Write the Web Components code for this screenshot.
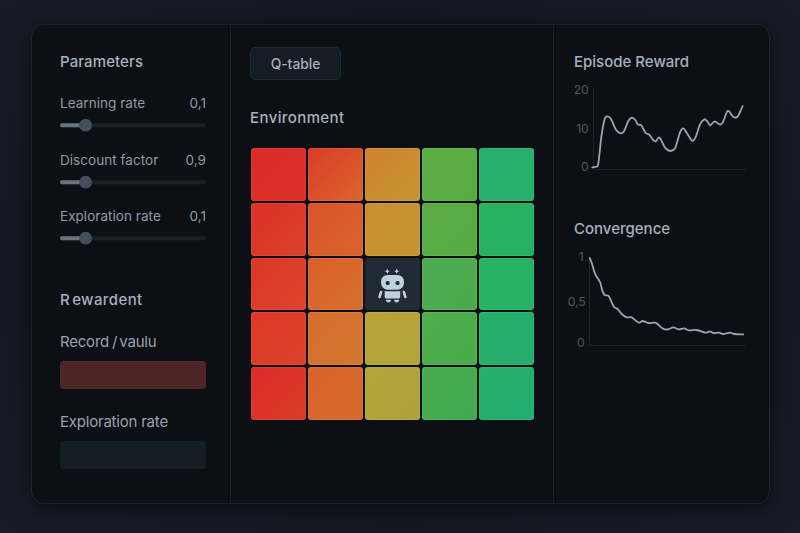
<!DOCTYPE html>
<html lang="en">
<head>
<meta charset="utf-8">
<title>Q-table</title>
<style>
  html, body { margin: 0; height: 100%; }
  body { font-family: Inter, "Liberation Sans", sans-serif; color: #a5afbe; background: #151b25; overflow: hidden; }
</style>
</head>
<body>
<rl-app></rl-app>
<script>
const define = (name, html, setup) => customElements.define(name, class extends HTMLElement {
  connectedCallback() {
    if (this.shadowRoot) return;
    const t = document.createElement('template');
    t.innerHTML = html;
    this.attachShadow({ mode: 'open' }).appendChild(t.content.cloneNode(true));
    if (setup) setup(this, this.shadowRoot);
  }
});

// Catmull-Rom spline through the given points
const spline = pts => pts.map((p, i) => {
  if (!i) return `M${p[0]} ${p[1]}`;
  const a = pts[i - 2] || pts[i - 1], b = pts[i - 1], d = pts[i + 1] || p;
  const c = [b[0] + (p[0] - a[0]) / 6, b[1] + (p[1] - a[1]) / 6, p[0] - (d[0] - b[0]) / 6, p[1] - (d[1] - b[1]) / 6];
  return `C${c.map(v => v.toFixed(2)).join(' ')} ${p[0]} ${p[1]}`;
}).join('');

define('rl-heading', `<style>
  :host { display: block; height: 20px; line-height: 20px; font-size: 15px; font-weight: 450; color: #a6b0bf; white-space: pre; }
</style><slot></slot>`);

define('rl-slider', `<style>
  :host { display: block; height: 56.5px; }
  .row { display: flex; justify-content: space-between; height: 20px; line-height: 20px; font-size: 13.5px; letter-spacing: .04px; color: #9199a6; }
  svg { display: block; margin-top: 5px; }
</style>
<div class="row"><span><slot></slot></span><span class="v"></span></div>
<svg width="146" height="14">
  <rect x="0" y="5.2" width="146" height="4" rx="2" fill="#192128"/>
  <rect x="0" y="5.2" width="26" height="4" rx="2" fill="#69727f"/>
  <circle cx="25.6" cy="7.2" r="6.4" fill="#474e5b"/>
</svg>`, (el, r) => { r.querySelector('.v').textContent = el.getAttribute('value'); });

define('rl-field', `<style>
  :host { display: block; color: #98a1af; }
  .label { height: 20px; line-height: 20px; font-size: 15px; letter-spacing: -.21px; white-space: pre; }
  .box { height: 28px; margin-top: 8.5px; border-radius: 3.5px; background: var(--field, #161e25); }
</style><div class="label"><slot></slot></div><div class="box"></div>`);

define('rl-button', `<style>
  :host { display: block; box-sizing: border-box; width: 91px; height: 33px; border: 1px solid #1e2a33; border-radius: 5px; background: #151c24; text-align: center; line-height: 32px; font-size: 13.8px; font-weight: 500; color: #a6b0bf; }
</style><slot></slot>`);

define('rl-robot', `<style>:host { display: block; height: 100%; } svg { display: block; width: 100%; height: 100%; }</style>
<svg viewBox="365.1 257.5 55.1 52.8" fill="#bdd0db">
  <path d="M387.4 268.1L388.2 270L390 270.8L388.2 271.6L387.4 273.5L386.6 271.6L384.8 270.8L386.6 270Z"/>
  <path d="M396.9 268.1L397.7 270L399.5 270.8L397.7 271.6L396.9 273.5L396.1 271.6L394.3 270.8L396.1 270Z"/>
  <rect x="381.3" y="274.4" width="22.8" height="14.8" rx="6.4"/>
  <circle cx="387.8" cy="282.6" r="2.15" fill="#1f2a34"/>
  <circle cx="397.7" cy="282.6" r="2.15" fill="#1f2a34"/>
  <path d="M384.8 290.8H400.4V296.4Q400.4 298.1 398.7 298.1H386.5Q384.8 298.1 384.8 296.4Z"/>
  <path d="M381.2 291.6L379.7 296.4M404 291.6L405.5 296.4" stroke="#bdd0db" stroke-width="2.7" stroke-linecap="round"/>
  <path d="M386.1 299.2H391.1V300Q390.6 302.1 388.6 302.1Q386.6 302.1 386.1 300ZM394.3 299.2H399.3V300Q398.8 302.1 396.8 302.1Q394.8 302.1 394.3 300Z"/>
</svg>`);

define('rl-cell', `<style>
  :host { display: block; border-radius: 3px; overflow: hidden; background: linear-gradient(135deg, var(--a), var(--b)); box-shadow: inset 0 0 0 1px var(--edge, rgba(255,255,255,.07)); }
</style><slot></slot>`);

define('rl-grid', `<style>
  :host { display: grid; width: 283px; height: 272px; grid-template: repeat(5, 1fr) / repeat(5, 1fr); gap: 2px; }
</style>`, (el, r) => {
  const cells = [
    ['#dc2b29','#de3027'], ['#dc3b29','#d9662b'], ['#d0832f','#c5962e'], ['#5cad45','#58ab42'], ['#24b06e','#25b068'],
    ['#dd3028','#da4129'], ['#da5429','#d8642b'], ['#cb902e','#c4962f'], ['#5aac43','#55ac43'], ['#27b35f','#26b063'],
    ['#dc3428','#dc4529'], ['#da6029','#d7712d'], ['#202831','#232b36'], ['#4dab51','#4aab4b'], ['#26b360','#25b065'],
    ['#de3727','#da4329'], ['#d76c2b','#d2782f'], ['#b8a336','#b2a439'], ['#50ae4a','#48ab4c'], ['#24af67','#23ae72'],
    ['#dd2b28','#da3c28'], ['#da622b','#d66b2d'], ['#b4a437','#aca33b'], ['#49ad4c','#42a951'], ['#25af67','#22ad73']
  ];
  cells.forEach(([a, b], i) => {
    const c = document.createElement('rl-cell');
    c.style.setProperty('--a', a);
    c.style.setProperty('--b', b);
    if (i === 12) {
      c.style.setProperty('--edge', 'transparent');
      c.appendChild(document.createElement('rl-robot'));
    }
    r.appendChild(c);
  });
});

define('rl-chart', `<style>
  :host { display: block; }
  svg { display: block; margin-left: -10px; overflow: visible; }
  text { font-size: 12.2px; fill: #4e5764; text-anchor: end; }
</style>
<svg width="190" height="106"><g class="labels"></g><path class="axis" fill="none" stroke="#1c242b"/><path class="line" fill="none" stroke="#98a4b5" stroke-width="1.8" stroke-linecap="round" stroke-linejoin="round"/></svg>`,
(el, r) => {
  const d = JSON.parse(el.getAttribute('data'));
  r.querySelector('.labels').innerHTML = d.labels.map(([t, x, y]) => `<text x="${x}" y="${y}">${t}</text>`).join('');
  r.querySelector('.axis').setAttribute('d', d.axis);
  // points are stored in thirds of a pixel
  r.querySelector('.line').setAttribute('d', spline(d.points.map(([x, y]) => [+((x / 3) - 14).toFixed(2), +(y / 3).toFixed(2)])));
});

define('rl-app', `<style>
  :host { display: block; box-sizing: border-box; width: 800px; height: 533px; padding: 24px 31px 29px; background: radial-gradient(ellipse at 50% 50%, #10161e 50%, #161c26 100%); }
  main { box-sizing: border-box; display: grid; grid-template-columns: 199px 323px 1fr; width: 739px; height: 480px; border: 1px solid #1b242d; border-radius: 13px; background: #0c1015; box-shadow: 0 4px 18px rgba(6,9,13,.65); }
  section { box-sizing: border-box; border-right: 1px solid #172027; }
  section:last-child { border: 0; }
  .left { padding: 27px 24px 0 28px; }
  .left rl-slider:first-of-type { margin-top: 21px; }
  .second { margin-top: 27.4px; }
  .second + rl-field { margin-top: 22.6px; }
  rl-field + rl-field { margin-top: 23.5px; }
  .mid { padding: 22px 0 0 19px; }
  .mid rl-heading { margin-top: 28px; letter-spacing: .4px; }
  .mid rl-grid { margin: 20px 0 0 .6px; }
  .right { padding: 27px 0 0 20px; }
  .conv { margin-top: 41px; }
</style>
<main>
  <section class="left">
    <rl-heading style="letter-spacing:.1px">Parameters</rl-heading>
    <rl-slider value="0,1">Learning rate</rl-slider>
    <rl-slider value="0,9">Discount factor</rl-slider>
    <rl-slider value="0,1">Exploration rate</rl-slider>
    <rl-heading class="second" style="letter-spacing:.4px"><span style="letter-spacing:2.4px">R</span>ewardent</rl-heading>
    <rl-field style="--field:#4f2627">Record<span style="margin:0 2px 0 3px">/</span>vaulu</rl-field>
    <rl-field>Exploration rate</rl-field>
  </section>
  <section class="mid">
    <rl-button>Q-table</rl-button>
    <rl-heading>Environment</rl-heading>
    <rl-grid></rl-grid>
  </section>
  <section class="right">
    <rl-heading>Episode Reward</rl-heading>
    <rl-chart data='{"labels":[["20",24.8,21.9],["10",24.8,60.6],["0",24.8,98.6]],"axis":"M29.5 16V97.5H182.5",
      "points":[[127,286],[137,284],[145,274],[154,195],[164,141],[173,133],[183,141],[198,173],[212,184],[222,178],[235,147],[246,137],[256,144],[264,158],[274,160],[287,183],[297,187],[308,202],[317,208],[329,197],[345,227],[362,237],[376,227],[390,181],[400,169],[410,182],[426,206],[437,195],[450,157],[463,142],[472,148],[481,160],[494,148],[510,158],[520,148],[530,121],[537,118],[548,133],[558,137],[566,129],[578,102]]}'></rl-chart>
    <rl-heading class="conv">Convergence</rl-heading>
    <rl-chart data='{"labels":[["1",19.8,22],["0,5",21.8,66.6],["0",20.6,108]],"axis":"M25.5 18V106.5H181.5",
      "points":[[119,57],[125,71],[136,106],[150,129],[157,155],[164,168],[175,170],[183,185],[192,204],[203,210],[215,225],[230,235],[245,235],[256,244],[267,251],[278,246],[295,252],[315,251],[325,257],[337,268],[348,272],[358,270],[370,265],[386,271],[402,268],[417,274],[440,273],[466,281],[479,277],[490,282],[507,281],[520,285],[540,281],[553,285],[580,286]]}'></rl-chart>
  </section>
</main>`);
</script>
</body>
</html>
